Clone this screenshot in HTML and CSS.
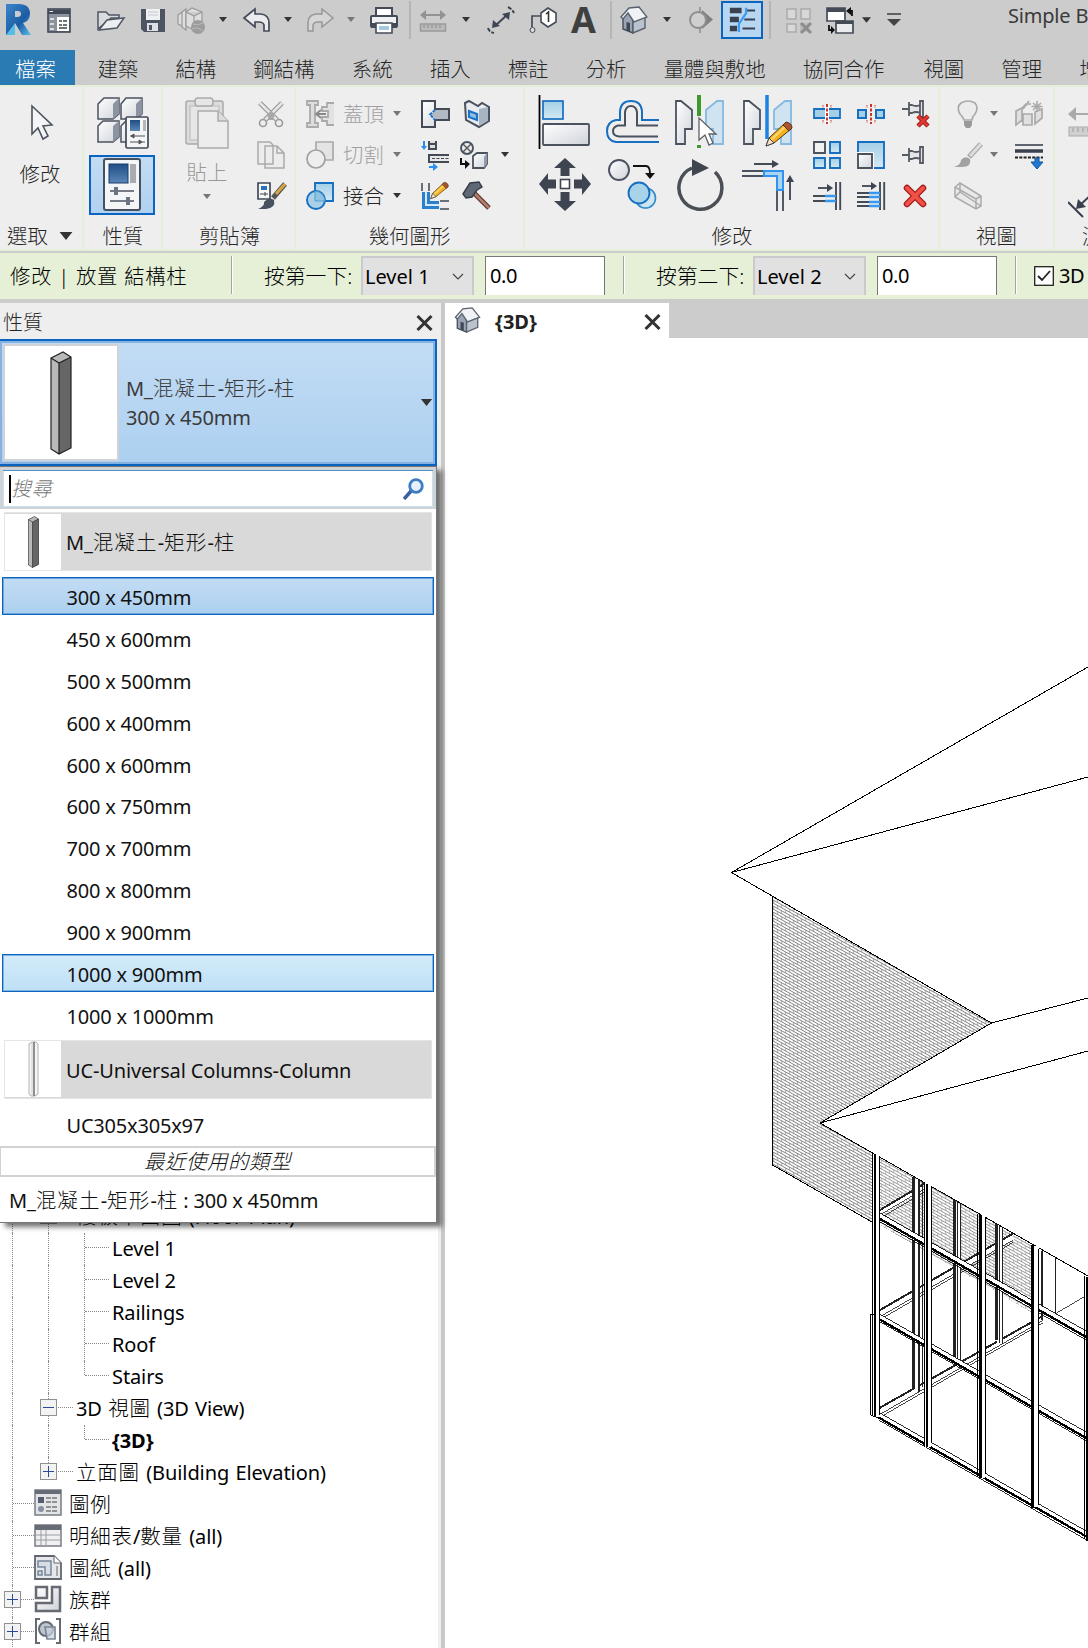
FILE: index.html
```html
<!DOCTYPE html>
<html lang="zh-Hant">
<head>
<meta charset="utf-8">
<title>Simple Building</title>
<link rel="stylesheet" href="styles.css">
</head>
<body>
<svg class="defs" width="0" height="0">
  <defs>
    <linearGradient id="metal" x1="0" y1="0" x2="1" y2="1"><stop offset="0" stop-color="#fff"/><stop offset="1" stop-color="#cfd3da"/></linearGradient>
    <linearGradient id="sky" x1="0" y1="0" x2="0" y2="1"><stop offset="0" stop-color="#a4cfe6"/><stop offset="1" stop-color="#d3e9f4"/></linearGradient>
    <linearGradient id="navy" x1="0" y1="0" x2="0" y2="1"><stop offset="0" stop-color="#1f4e86"/><stop offset="1" stop-color="#5b86b6"/></linearGradient>
    <linearGradient id="logo" x1="0" y1="0" x2="1" y2="1"><stop offset="0" stop-color="#3d86cb"/><stop offset=".6" stop-color="#1b5ca3"/><stop offset="1" stop-color="#5cc0ea"/></linearGradient>
    <pattern id="brick" width="8" height="6" patternUnits="userSpaceOnUse" patternTransform="skewY(29)"><path d="M0 .5H8M0 3.5H8M1.5.5V3.5M5.5 3.5V6.5" stroke="#858585" stroke-width=".85" fill="none"/></pattern>
    <pattern id="brick2" width="24" height="18" patternUnits="userSpaceOnUse" patternTransform="skewY(29)"><path d="M0 1.5H24M0 10.5H24M4.5 1.5V10.5M16.5 10.5V19.5" stroke="#999" stroke-width="2.6" fill="none"/></pattern>
    <symbol id="tri" viewBox="0 0 8 5"><path d="M0 0H8L4 5Z"/></symbol>
    <symbol id="house" viewBox="0 0 28 28"><path d="M3 12L8 6L13 14V27L3 23Z" fill="#9aa4b2" stroke="#454c58" stroke-width="1.400"/><path d="M13 14V27L25 22V11Z" fill="#b9c2cd" stroke="#59616e" stroke-width="1.400"/><path d="M1 11L9 2L19 1L27 11L14 16L8 7L3 13Z" fill="#f1f2f5" stroke="#59616e" stroke-width="1.400"/><path d="M6.500 16V24L10 25.500V17Z" fill="#3f4856"/></symbol>
    <symbol id="column" viewBox="0 0 22 104"><path d="M1 7L13 1L21 6V97L9 103L1 98Z" fill="#b9b9b9"/><path d="M9 12L21 6V97L9 103Z" fill="#666"/><path d="M1 7L13 1L21 6V97L9 103L1 98ZM1 7L9 12L21 6M9 12V103" fill="none" stroke="#222" stroke-width="1.2"/></symbol>
    <symbol id="pencil" viewBox="0 0 28 26"><path d="M1 25L4 17L20 2L26 8L9 22Z" fill="#f6b11b" stroke="#4a3a16" stroke-width="1"/><path d="M6 19L22 4" stroke="#fbd879" stroke-width="2"/><path d="M18 4L21 1Q27 2 27 7L24 10Z" fill="#a8552f" stroke="#613018"/><path d="M1 25L4 17L9 22Z" fill="#f2e3c6" stroke="#444"/></symbol>
    <symbol id="plus" viewBox="0 0 17 17"><rect x=".5" y=".5" width="16" height="16" fill="#f3f3f3" stroke="#919191"/><path d="M3 8.5H14M8.5 3V14" stroke="#2b4a94"/></symbol>
    <symbol id="minus" viewBox="0 0 17 17"><rect x=".5" y=".5" width="16" height="16" fill="#f3f3f3" stroke="#919191"/><path d="M3 8.5H14" stroke="#2b4a94"/></symbol>
    <symbol id="close" viewBox="0 0 17 16"><path d="M1.5 1L15.5 15M15.5 1L1.5 15" stroke="#333" stroke-width="3"/></symbol>
    <symbol id="pin" viewBox="0 0 28 28"><path d="M1 14H8M8 7V21M8 10H11Q15 12 19 10V18Q15 16 11 18H8M19 6H22V22H19Z" fill="#e4e5e8" stroke="#555a63" stroke-width="1.8"/></symbol>
  </defs>
</svg>

<header class="qat">
  <svg class="i28 tall" viewBox="0 0 28 33"><path d="M1 1H14Q25 1 25 11Q25 18 18 20L26 32H17L10 20V32H1Z" fill="url(#logo)"/><path d="M10 8H13Q16 8 16 11Q16 14 12 14H10Z" fill="#ccc"/><path d="M10 20L1 32H10Z" fill="#57bce6"/></svg>
  <svg class="i28" viewBox="0 0 28 28"><rect x="3" y="3" width="22" height="23" fill="#8d939e" stroke="#414957" stroke-width="1.6"/><path d="M3 4H25V8H3Z" fill="#414957"/><path d="M12 11H24V25H12Z" fill="#fff"/><path d="M14 15H17M14 19H17M14 22H22M18 15H22M18 19H22" stroke="#444" stroke-width="1.6"/><path d="M5 12H9V14H5ZM5 17H9V19H5ZM5 22H9V24H5Z" fill="#ddd"/><path d="M4.500 5.500H8" stroke="#eee"/></svg>
  <svg class="i28" viewBox="0 0 28 28"><path d="M1 23V6H9L12 9H22V12H14L1 23Z" fill="#d8dbe0" stroke="#4f5763" stroke-width="1.5"/><path d="M2 24L10 14L27 12L20 22Z" fill="#eceef1" stroke="#4f5763" stroke-width="1.5"/></svg>
  <svg class="i28" viewBox="0 0 28 28"><path d="M2 3H26V26H5L2 23Z" fill="#4d5563"/><path d="M7 3H21V14H7Z" fill="#eef0f3"/><path d="M9 6H19M9 9H19" stroke="#c2c6cd"/><path d="M8 17H19V25H8Z" fill="#dde0e5"/><path d="M10 19H13V24H10Z" fill="#4d5563"/></svg>
  <svg class="i28" viewBox="0 0 28 28"><g fill="#dedede" stroke="#999" stroke-width="1.2"><path d="M1 9L5 6V20L1 18ZM5 6L9 3V24L5 21Z"/><path d="M9 6L15 2L25 6V17L17 24L9 20ZM9 6L17 10L25 6M17 10V24"/></g><circle cx="21" cy="21" r="7" fill="#9c9c9c"/><path d="M16 18Q20 20 26 17M15 23Q20 20 26 25" stroke="#bbb" fill="none"/></svg>
  <svg class="tri"><use href="#tri"/></svg>
  <svg class="i28" viewBox="0 0 28 28"><path d="M1 12L12 3V8H18Q26 9 26 17V25H21V19Q20 16 16 16H12V21Z" fill="#e9ebee" stroke="#444b57" stroke-width="1.7"/></svg>
  <svg class="tri"><use href="#tri"/></svg>
  <svg class="i28" viewBox="0 0 28 28"><path d="M27 12L16 3V8H10Q2 9 2 17V25H7V19Q8 16 12 16H16V21Z" fill="#d6d6d6" stroke="#969696" stroke-width="1.5"/></svg>
  <svg class="tri dim"><use href="#tri"/></svg>
  <svg class="i28" viewBox="0 0 28 28"><path d="M6 9V2H22V9" fill="#fff" stroke="#444b57" stroke-width="2"/><rect x="1" y="10" width="26" height="11" rx="1" fill="#eef0f3" stroke="#444b57" stroke-width="2"/><path d="M1 17H27V21H1Z" fill="#444b57"/><path d="M6 17H22V27H6Z" fill="#fff" stroke="#444b57" stroke-width="1.600"/><path d="M9 20H19V24H9Z" fill="#a5c8df"/></svg>
  <i class="vsep"></i>
  <svg class="i28" viewBox="0 0 28 28"><path d="M5 9H23" stroke="#929292" stroke-width="2"/><path d="M7 4V14L1 9ZM21 4V14L27 9Z" fill="#929292"/><rect x="1.500" y="18" width="25" height="7" fill="#bbb" stroke="#999" stroke-width="1.500"/><path d="M5 19V22M9 19V22M13 19V22M17 19V22M21 19V22" stroke="#888"/></svg>
  <svg class="tri"><use href="#tri"/></svg>
  <svg class="i28" viewBox="0 0 28 28"><path d="M8 20L21 8" stroke="#3e4654" stroke-width="2"/><path d="M5 22L6 14L13 20ZM23 6L22 14L15 8Z" fill="#3e4654"/><path d="M1 22Q2 26 7 27M21 1Q25 3 27 7" stroke="#3e4654" stroke-width="2" stroke-dasharray="4 1.500" fill="none"/></svg>
  <svg class="i28" viewBox="0 0 28 28"><path d="M3 21V10H12" stroke="#444b57" stroke-width="1.700" fill="none"/><circle cx="3.500" cy="24" r="2.500" fill="#ddd" stroke="#444b57"/><path d="M12 7L19 2L27 7V16L19 21L12 16Z" fill="#fff" stroke="#444b57" stroke-width="1.600"/><path d="M17 8L19.500 6V16" stroke="#333" stroke-width="1.600" fill="none"/></svg>
  <b class="bigA">A</b>
  <i class="vsep"></i>
  <svg class="i28"><use href="#house"/></svg>
  <svg class="tri"><use href="#tri"/></svg>
  <svg class="i28" viewBox="0 0 28 28"><path d="M13 1V27" stroke="#8f8f8f" stroke-width="1.600"/><path d="M15 4L26 13.500L15 23Z" fill="#808080"/><circle cx="11" cy="14" r="8" fill="#cfcfcf" stroke="#8f8f8f" stroke-width="2"/></svg>
  <span class="qat-active"><svg viewBox="0 0 30 30"><path d="M1 5H14M1 15H11M1 25H9" stroke="#39414f" stroke-width="6"/><path d="M19 5H29M17 15H29M15 25H29" stroke="#39414f" stroke-width="2"/><path d="M19 2V8L11 20V29" stroke="#3d9bf2" stroke-width="2.500" fill="none"/></svg></span>
  <i class="vsep"></i>
  <svg class="i28" viewBox="0 0 28 28"><path d="M2 3H11V13H2ZM16 3H25V13H16ZM2 18H11V26H2Z" fill="#d8d8d8" stroke="#aaa" stroke-width="1.500"/><path d="M15 17H25V26H15Z" fill="#bbb"/><path d="M16 17L26 27M26 17L16 27" stroke="#8d8d8d" stroke-width="3"/></svg>
  <svg class="i28" viewBox="0 0 28 28"><path d="M1 2H19V15H1Z" fill="#fff" stroke="#444b57" stroke-width="1.700"/><path d="M1 2H19V6H1Z" fill="#444b57"/><path d="M10 15H27V27H10Z" fill="#e9ebee" stroke="#444b57" stroke-width="1.700"/><path d="M10 15H27V18H10Z" fill="#444b57"/><path d="M22 5H26V10M3 19V24H6" stroke="#111" stroke-width="1.800" fill="none"/><path d="M25 1L20 5L25 9ZM5 20L9 24L5 28Z" fill="#111"/></svg>
  <svg class="tri big"><use href="#tri"/></svg>
  <svg class="cust" viewBox="0 0 14 14"><path d="M0 1H14" stroke="#444" stroke-width="1.600"/><path d="M0 6H14L7 13Z" fill="#444"/></svg>
  <span class="title">Simple Building</span>
</header>

<nav class="tabs">
  <span class="file">檔案</span><span>建築</span><span>結構</span><span>鋼結構</span><span>系統</span><span>插入</span><span>標註</span><span>分析</span><span>量體與敷地</span><span class="collab">協同合作</span><span>視圖</span><span>管理</span><span>增益集</span>
</nav>

<section class="ribbon">
  <div class="panel p1">
    <div class="modify"><svg viewBox="0 0 24 38"><path d="M2 2V30L8 24L13 35L18 32L13 22L22 21Z" fill="#f4f5f7" stroke="#4d5460" stroke-width="1.600"/></svg><span>修改</span></div>
    <div class="plabel">選取 <svg class="tri huge"><use href="#tri"/></svg></div>
  </div>
  <div class="panel p2">
    <div class="props">
      <svg width="54" height="54" viewBox="0 0 54 54"><g fill="url(#metal)" stroke="#4b525f" stroke-width="1.500"><path d="M2 8L8 2H23V18L17 23H2Z"/><path d="M25 8L30 2H46V18L40 23H25Z"/><path d="M2 30L7 25H23V41L17 46H2Z"/><path d="M25 30L30 25H46V46H25Z"/></g><path d="M17 8L23 2V18L17 23ZM40 8L46 2V18L40 23ZM17 30L23 25V41L17 46Z" fill="#8c94a1"/><rect x="30" y="21" width="22" height="31" rx="1.500" fill="#f4f5f7" stroke="#414957" stroke-width="1.700"/><rect x="34" y="24" width="10" height="11" fill="url(#navy)"/><path d="M47 24H50V35H47Z" fill="#b4b6ba"/><path d="M34 40H49M34 46H49" stroke="#555"/><path d="M35 40L38 38V42ZM46 46L43 44V48Z" fill="#555" stroke="#555"/></svg>
      <span class="on"><svg width="38" height="54" viewBox="0 0 38 54"><rect x="1" y="1" width="36" height="51" rx="2" fill="#f4f5f7" stroke="#46505e" stroke-width="2"/><rect x="6" y="6" width="19" height="19" fill="url(#navy)" stroke="#173d6c"/><path d="M27 6H33V25H27Z" fill="#a9abaf"/><path d="M7 33H31M7 43H31" stroke="#4c5461" stroke-width="1.500"/><path d="M11 29H15V37H11ZM23 39H27V47H23Z" fill="#6b7482"/></svg></span>
    </div>
    <div class="plabel">性質</div>
  </div>
  <div class="panel p3">
    <div class="clip">
      <div class="paste">
        <svg width="46" height="54" viewBox="0 0 46 54"><g fill="#dcdcdc" stroke="#aaa" stroke-width="1.500"><rect x="2" y="5" width="37" height="43" rx="2"/><path d="M6 10H35V44H6Z" fill="#e6e6e6" stroke="#c6c6c6"/><rect x="11" y="2" width="18" height="8" rx="3" fill="#e6e6e6"/><path d="M14 15H34L44 25V52H14Z" fill="#ededed"/><path d="M34 15V25H44"/></g></svg>
        <span>貼上</span><svg class="tri dim"><use href="#tri"/></svg>
      </div>
      <div class="stack">
        <svg class="i28" viewBox="0 0 28 28"><path d="M3 3L20 20M25 3L8 20" stroke="#999" stroke-width="5"/><path d="M3 3L20 20M25 3L8 20" stroke="#e6e6e6" stroke-width="2.600"/><circle cx="6" cy="23" r="3.500" fill="#eee" stroke="#999" stroke-width="1.600"/><circle cx="22" cy="23" r="3.500" fill="#eee" stroke="#999" stroke-width="1.600"/><path d="M10 14L14 11L18 14L16 20H12Z" fill="#a8a8a8"/></svg>
        <svg class="i28" viewBox="0 0 28 28"><path d="M1 1H13L16 4V23H1ZM8 5H20L27 12V27H8ZM20 5V12H27" fill="#ececec" stroke="#aaa" stroke-width="1.500"/></svg>
        <svg class="i28" viewBox="0 0 28 28"><path d="M1 1H13V17H1Z" fill="#f7f7f7" stroke="#414957" stroke-width="1.700"/><path d="M4 4H10V8H4Z" fill="#2671bb"/><path d="M3 12H11M8 10V14" stroke="#444"/><path d="M28 2L16 16" stroke="#555" stroke-width="5"/><path d="M28 2L19 12" stroke="#d7a643" stroke-width="3"/><path d="M1 27Q8 24 7 20Q12 14 17 18Q19 26 9 27Z" fill="#475160"/></svg>
      </div>
    </div>
    <div class="plabel">剪貼簿</div>
  </div>
  <div class="panel p4">
    <div class="geo">
      <svg class="i28" viewBox="0 0 28 28"><path d="M1 1H12V5H9V23H12V27H1V23H4V5H1Z" fill="#ddd" stroke="#aaa" stroke-width="1.800"/><path d="M28 3H21V7H16V11H22V17H16V21H21V25H28" fill="#e2e2e2" stroke="#aaa" stroke-width="1.800"/><path d="M11 14H20M15 10L10 14L15 18" stroke="#888" stroke-width="1.800" fill="none"/></svg>
      <span class="off">蓋頂</span><svg class="tri dim"><use href="#tri"/></svg>
      <svg class="i28" viewBox="0 0 28 28"><path d="M1 1H14V9H28V20H14V27H1Z" fill="url(#metal)" stroke="#444b57" stroke-width="2"/><path d="M15 10L10 14.500L15 19H27V10Z" fill="#b3bac4"/><path d="M14 10L9 14.500L14 20" stroke="#1d72c8" stroke-width="2" stroke-dasharray="3 1" fill="none"/></svg>
      <svg class="i28" viewBox="0 0 28 28"><path d="M2 3L6 1L15 6L19 3L26 7V21L16 27L3 20Z" fill="#e8ebef" stroke="#4b525f" stroke-width="2"/><path d="M16 9V26L25 20.500V7Z" fill="#a7b4c2"/><path d="M6 11L14 14V20L6 17Z" fill="#8fc0e8" stroke="#1d72c8" stroke-width="2.200"/></svg><i></i>
      <svg class="i28" viewBox="0 0 28 28"><path d="M10 1H27V19H10Z" fill="#e4e4e4" stroke="#aaa" stroke-width="1.700"/><circle cx="10" cy="18" r="9" fill="#eee" stroke="#a0a0a0" stroke-width="1.700"/></svg>
      <span class="off">切割</span><svg class="tri dim"><use href="#tri"/></svg>
      <svg class="i28" viewBox="0 0 28 28"><path d="M3 0V6M8 26H13" stroke="#2b8df0" stroke-width="2"/><path d="M0 5H6L3 9ZM12 22V30L17 26Z" fill="#2b8df0"/><path d="M8 0V8H15V0M8 3H15" stroke="#444b57" stroke-width="2" fill="#ddd"/><path d="M28 14H8V21H28" fill="#e5e7ea" stroke="#444b57" stroke-width="2"/><path d="M11 17.500H28" stroke="#444" stroke-dasharray="3 1.500"/></svg>
      <svg class="i28 m2" viewBox="0 0 28 28"><circle cx="7" cy="7" r="6" fill="#e8eaed" stroke="#4b525f" stroke-width="1.900"/><path d="M3 3L11 11M11 3L3 11" stroke="#555" stroke-width="1.400"/><path d="M1 17V23H6" stroke="#111" stroke-width="2" fill="none"/><path d="M5 19L10 23L5 28Z" fill="#111"/><path d="M13 15L17 12H27V23L24 27H13Z" fill="url(#metal)" stroke="#4b525f" stroke-width="1.800"/><path d="M24 16L27 12V23L24 27Z" fill="#929ba8"/></svg><svg class="tri"><use href="#tri"/></svg>
      <svg class="i28" viewBox="0 0 28 28"><path d="M9 1H27V19H9Z" fill="url(#sky)" stroke="#176fc1" stroke-width="1.900"/><circle cx="10" cy="18" r="9" fill="#a9d2e8" stroke="#176fc1" stroke-width="1.900"/><path d="M9 9V19H19Q18 10 9 9Z" fill="#8dc4e1" stroke="#579dcc"/></svg>
      <span>接合</span><svg class="tri"><use href="#tri"/></svg>
      <svg class="i28" viewBox="0 0 28 28"><path d="M1 1V9M8 1V9M19 19H28M19 27H28" stroke="#6a707a" stroke-width="2"/><path d="M1 10V27H18V19H9V10Z" fill="#2a80cc"/><path d="M5 10V23H18" fill="none" stroke="#d5eaf6" stroke-width="2"/><use href="#pencil" x="9" y="-1" width="19" height="19"/></svg>
      <svg class="i28" viewBox="0 0 28 28"><path d="M11 11L26 26" stroke="#583732" stroke-width="5"/><path d="M11 11L26 26" stroke="#b87e6d" stroke-width="2.500"/><path d="M0 12L7 1L16 0L19 5L14 8L9 15L3 16Z" fill="#5f6976" stroke="#343b46" stroke-width="1.400"/></svg><i></i>
    </div>
    <div class="plabel">幾何圖形</div>
  </div>
  <div class="panel p5">
    <div class="mod">
      <div class="large">
        <svg viewBox="0 0 56 56"><path d="M3.500 2V56" stroke="#000" stroke-width="1.800"/><rect x="7" y="8" width="20" height="18" fill="url(#sky)" stroke="#176fc1" stroke-width="1.700"/><rect x="7" y="31" width="46" height="21" rx="1" fill="url(#metal)" stroke="#4b525f" stroke-width="1.800"/></svg>
        <svg viewBox="0 0 56 56"><path d="M55 27H38V18Q37 8 27 8Q17 8 16 18V27H12Q3 29 3 38Q3 48 12 49H55" fill="none" stroke="#176fc1" stroke-width="2"/><path d="M54 32.500H33V19Q32 13 27 13Q22 13 21 19V32.500H14Q9 34 9 38Q9 43 15 43.500H54" fill="none" stroke="#4b525f" stroke-width="2"/></svg>
        <svg viewBox="0 0 56 56"><path d="M5 8H10L21 17V36H14V51H5Z" fill="url(#metal)" stroke="#4b525f" stroke-width="1.800"/><path d="M52 8H46L35 17V36H42V51H52Z" fill="#cfe4f0" stroke="#86b9df" stroke-width="1.800"/><path d="M28 2V23M28 52V55" stroke="#3d9a2d" stroke-width="4"/><path d="M28 25V47L34 42L38 52L42 50L38 41H45Z" fill="#fff" stroke="#5c6068" stroke-width="1.300"/></svg>
        <svg viewBox="0 0 56 56"><path d="M5 8H10L21 17V36H14V51H5Z" fill="url(#metal)" stroke="#4b525f" stroke-width="1.800"/><path d="M52 8H46L35 17V36H42V51H52Z" fill="#cfe4f0" stroke="#86b9df" stroke-width="1.800"/><path d="M28 2V46" stroke="#1d82e2" stroke-width="3.500"/><use href="#pencil" x="26" y="28" width="28" height="26"/></svg>
        <svg viewBox="0 0 56 56"><path d="M29 2L40 12H33.500V20H24.500V12H18ZM29 55L40 45H33.500V36H24.500V45H18ZM3 28L12 17V23.500H20V32.500H12V39ZM55 28L46 17V23.500H38V32.500H46V39Z" fill="#3e4551"/><rect x="24.500" y="23.500" width="9" height="9" fill="#fff" stroke="#3e4551" stroke-width="1.600"/></svg>
        <svg viewBox="0 0 56 56"><circle cx="15" cy="14" r="10" fill="url(#metal)" stroke="#4b525f" stroke-width="1.900"/><path d="M29 10H42Q46 10 46 18" stroke="#111" stroke-width="1.800" fill="none"/><path d="M41 17H51L46 23Z" fill="#111"/><circle cx="41.500" cy="42" r="10" fill="#cde5f1" stroke="#318bca" stroke-width="1.600"/><circle cx="35" cy="37" r="10.500" fill="#a9d3e9" stroke="#176fc1" stroke-width="1.900"/></svg>
        <svg viewBox="0 0 56 56"><path d="M21 12A21.500 21.500 0 1 0 44 16" fill="none" stroke="#4a4e55" stroke-width="3.500"/><path d="M21 3V20L38 12Z" fill="#40454e"/></svg>
        <svg viewBox="0 0 56 56"><path d="M3 15H25M3 20H25M38 34V55M44 34V55" stroke="#4b525f" stroke-width="1.900"/><path d="M25 15H44V34H38V20H25Z" fill="#a9d3f0" stroke="#2e93ed" stroke-width="2"/><path d="M15 8H34M51 44V25" stroke="#444b57" stroke-width="1.900"/><path d="M33 4L40 8L33 12ZM47 26L51 19L55 26Z" fill="#3e4551"/></svg>
      </div>
      <div class="small">
        <svg class="i28" viewBox="0 0 28 28"><path d="M1 9H27V18H1Z" fill="#a4cfe6" stroke="#176fc1" stroke-width="1.800"/><path d="M14 4V24" stroke="#fff" stroke-width="4"/><path d="M14 4V24" stroke="#c9352c" stroke-width="2" stroke-dasharray="3 1.500"/><path d="M10 5V8M18 5V8M10 20V23M18 20V23" stroke="#c9352c" stroke-dasharray="1.500 1"/></svg>
        <svg class="i28" viewBox="0 0 28 28"><path d="M1 10H9V18H1ZM19 10H27V18H19Z" fill="#a4cfe6" stroke="#176fc1" stroke-width="2"/><path d="M14 4V24" stroke="#c9352c" stroke-width="2" stroke-dasharray="3 1.500"/><path d="M10 5V8M18 5V8M10 20V23M18 20V23" stroke="#c9352c" stroke-dasharray="1.500 1"/></svg>
        <svg class="i28" viewBox="0 0 28 28"><use href="#pin" y="-5" width="28" height="28"/><path d="M17 16L27 26M27 16L17 26" stroke="#8c1a17" stroke-width="4.500"/><path d="M17 16L27 26M27 16L17 26" stroke="#e5362e" stroke-width="2.800"/></svg>
        <svg class="i28" viewBox="0 0 28 28"><g fill="url(#sky)" stroke="#176fc1" stroke-width="1.900"><path d="M1 1H12V12H1Z" fill="#f1f1f1" stroke="#4b525f"/><path d="M17 1H27V12H17Z"/><path d="M1 17H12V27H1Z"/><path d="M17 17H27V27H17Z"/></g></svg>
        <svg class="i28" viewBox="0 0 28 28"><path d="M1 1H27V27H1Z" fill="url(#sky)" stroke="#176fc1" stroke-width="1.900"/><path d="M0 11H17V28H0Z" fill="#fff"/><path d="M1 13H15V27H1Z" fill="url(#metal)" stroke="#4b525f" stroke-width="1.900"/></svg>
        <svg class="i28"><use href="#pin"/></svg>
        <svg class="i28" viewBox="0 0 28 28"><path d="M23 0V28M27.200 0V28" stroke="#444b57" stroke-width="1.900"/><path d="M0 14H12M0 19H12" stroke="#444b57" stroke-width="1.900"/><path d="M12 14H23M12 19H23" stroke="#3698ee" stroke-width="2.500"/><path d="M5 6H17" stroke="#3e4551" stroke-width="1.800"/><path d="M14 2L20 6L14 10Z" fill="#3e4551"/></svg>
        <svg class="i28" viewBox="0 0 28 28"><path d="M23 0V28M27.200 0V28" stroke="#444b57" stroke-width="1.900"/><path d="M0 11H12M0 15H12M0 20H12M0 24H12" stroke="#444b57" stroke-width="1.900"/><path d="M12 11H23M12 15H23M12 20H23M12 24H23" stroke="#3698ee" stroke-width="2.500"/><path d="M5 4H17" stroke="#3e4551" stroke-width="1.800"/><path d="M14 0L20 4L14 8Z" fill="#3e4551"/></svg>
        <svg class="i28" viewBox="0 0 28 28"><path d="M6 6L22 22M22 6L6 22" stroke="#a31815" stroke-width="6.500" stroke-linecap="round"/><path d="M6 6L22 22M22 6L6 22" stroke="#ef5048" stroke-width="4" stroke-linecap="round"/></svg>
      </div>
    </div>
    <div class="plabel">修改</div>
  </div>
  <div class="panel p6">
    <div class="view">
      <svg class="i28" viewBox="0 0 28 28"><path d="M10 20Q9 17 6 14Q2 7 7 3Q14-1 21 3Q25 8 21 14Q18 17 18 20Z" fill="#ececec" stroke="#aaa" stroke-width="1.700"/><path d="M10 21H18V25L16 28H12L10 25Z" fill="#999"/></svg>
      <svg class="tri dim"><use href="#tri"/></svg>
      <svg class="i28" viewBox="0 0 28 28"><path d="M1 11L7 8V20L1 25ZM8 14H17V25H8ZM20 12L27 9V18L20 24ZM6 9L11 4H16M14 1L8 9" fill="#e0e0e0" stroke="#aaa" stroke-width="1.700"/><path d="M22 1V12M16.500 6.500H27.500M18 3L26 10M26 3L18 10" stroke="#aaa" stroke-width="1.600"/></svg>
      <svg class="i28" viewBox="0 0 28 28"><path d="M27 3L15 16" stroke="#aaa" stroke-width="5.500"/><path d="M27 3L16 15" stroke="#ddd" stroke-width="3"/><path d="M0 26Q7 24 7 19Q11 14 16 18Q18 25 9 26Z" fill="#a2a2a2"/></svg>
      <svg class="tri dim"><use href="#tri"/></svg>
      <svg class="i28" viewBox="0 0 28 28"><path d="M0 4H28" stroke="#39414f" stroke-width="1.600"/><path d="M0 10H28" stroke="#39414f" stroke-width="3.500"/><path d="M0 16.500H28" stroke="#222" stroke-width="1.800" stroke-dasharray="3 1.300"/><path d="M20 17H24V21H28L22 28L16 21H20Z" fill="#1f78d4" stroke="#155497"/></svg>
      <svg class="i28" viewBox="0 0 28 28"><path d="M1 5L6 1L27 14V24L22 27L1 15ZM1 5L22 17V27M22 17L27 14M6 1V10L1 15M6 10L27 24" fill="#e9e9e9" stroke="#aaa" stroke-width="1.500"/></svg>
    </div>
    <div class="plabel">視圖</div>
  </div>
  <div class="panel p7">
    <div class="meas">
      <svg width="28" height="30" viewBox="0 0 28 30"><path d="M6 7H28" stroke="#aaa" stroke-width="2"/><path d="M8 0V14L0 7Z" fill="#aaa"/><rect x="1" y="20" width="30" height="9" fill="#d0d0d0" stroke="#aaa"/><path d="M5 21V25M10 21V25M15 21V25M20 21V25" stroke="#999"/></svg>
      <svg width="28" height="28" viewBox="0 0 28 28"><path d="M0 10L15 25M10 15L26 0" stroke="#39414f" stroke-width="2"/><path d="M8 17L10 7L18 15Z" fill="#39414f"/></svg>
    </div>
    <div class="plabel">測量</div>
  </div>
</section>

<section class="options">
  <span class="mode">修改 | 放置 結構柱</span>
  <i></i>
  <label class="first">按第一下:</label><span class="combo">Level 1<svg viewBox="0 0 12 7"><path d="M1 1L6 6L11 1" fill="none" stroke="#444" stroke-width="1.200"/></svg></span><span class="num">0.0</span>
  <i class="second-rule"></i>
  <label class="next">按第二下:</label><span class="combo">Level 2<svg viewBox="0 0 12 7"><path d="M1 1L6 6L11 1" fill="none" stroke="#444" stroke-width="1.200"/></svg></span><span class="num">0.0</span>
  <i class="third-rule"></i>
  <svg class="check" viewBox="0 0 20 20"><rect x=".7" y=".7" width="18.600" height="18.600" fill="#fff" stroke="#222" stroke-width="1.300"/><path d="M4 10L8 14L16 5" fill="none" stroke="#222" stroke-width="1.800"/></svg>
  <span class="three">3D</span>
</section>

<main class="work">
  <aside class="side">
    <div class="side-head"><span>性質</span><svg><use href="#close"/></svg></div>
    <div class="selector">
      <span class="thumb"><svg><use href="#column"/></svg></span>
      <span class="names">M_<span class="c">混凝土</span>-<span class="c">矩形</span>-<span class="c">柱</span><br>300 x 450mm</span>
      <svg class="tri huge"><use href="#tri"/></svg>
    </div>
    <div class="tree">
      <div class="row clipped"><i class="g"></i><i class="g t"><svg class="tg"><use href="#minus"/></svg></i><span class="lv2"><span class="c">樓板平面圖</span> (Floor Plan)</span></div>
      <div class="row"><i class="g"></i><i class="g"></i><i class="g h"></i><span class="leaf">Level 1</span></div>
      <div class="row"><i class="g"></i><i class="g"></i><i class="g h"></i><span class="leaf">Level 2</span></div>
      <div class="row"><i class="g"></i><i class="g"></i><i class="g h"></i><span class="leaf">Railings</span></div>
      <div class="row"><i class="g"></i><i class="g"></i><i class="g h"></i><span class="leaf">Roof</span></div>
      <div class="row"><i class="g"></i><i class="g"></i><i class="g h end"></i><span class="leaf">Stairs</span></div>
      <div class="row"><i class="g"></i><i class="g h t"><svg class="tg"><use href="#minus"/></svg></i><span class="lv2">3D <span class="c">視圖</span> (3D View)</span></div>
      <div class="row"><i class="g"></i><i class="g"></i><i class="g h end"></i><b class="leaf">{3D}</b></div>
      <div class="row"><i class="g"></i><i class="g h t end"><svg class="tg"><use href="#plus"/></svg></i><span class="lv2"><span class="c">立面圖</span> (Building Elevation)</span></div>
      <div class="row top"><i class="g h"></i><svg class="ti" viewBox="0 0 28 28"><path d="M1 1H27V26H1Z" fill="#e3e4e7" stroke="#777b84" stroke-width="1.500"/><path d="M1 1H27V5H1Z" fill="#666c78"/><path d="M4 8H10V14H4Z" fill="#555e70"/><circle cx="7" cy="20" r="3" fill="#8790a0"/><path d="M12 9H24M12 13H24M12 18H24M12 22H24" stroke="#777" stroke-width="1.300" stroke-dasharray="5 1"/></svg><span class="c">圖例</span></div>
      <div class="row top"><i class="g h"></i><svg class="ti" viewBox="0 0 28 28"><path d="M1 4H27V25H1Z" fill="#f0f0f1" stroke="#777b84" stroke-width="1.500"/><path d="M1 4H27V9H1Z" fill="#666c78"/><path d="M1 14H27M1 19H27M7 9V25M12 9V25" stroke="#999da5"/></svg><span class="mixed"><span class="c">明細表</span>/<span class="c">數量</span> (all)</span></div>
      <div class="row top"><i class="g h"></i><svg class="ti" viewBox="0 0 28 28"><path d="M1 3H20L27 10V26H1Z" fill="#e5e7ea" stroke="#60656f" stroke-width="1.800"/><path d="M20 3V10H27" fill="#fff" stroke="#60656f"/><path d="M4 8H17V22H11V14H4ZM4 18H8V22H4Z" fill="#d7dde5" stroke="#76869a" stroke-width="1.500"/><path d="M23 13V23" stroke="#666"/></svg><span class="mixed"><span class="c">圖紙</span> (all)</span></div>
      <div class="row top"><i class="g h rt"><svg class="tg"><use href="#plus"/></svg></i><svg class="ti" viewBox="0 0 28 28"><path d="M2 2H13V13H2ZM18 2H26V26H2V18H18Z" fill="url(#metal)" stroke="#656a73" stroke-width="2.500"/></svg><span class="c">族群</span></div>
      <div class="row top"><i class="g h rt"><svg class="tg"><use href="#plus"/></svg></i><svg class="ti" viewBox="0 0 28 28"><path d="M6 2H2V26H6M22 2H26V26H22" fill="none" stroke="#656a73" stroke-width="2"/><circle cx="12" cy="12" r="7" fill="#bfc6cf" stroke="#656a73" stroke-width="2"/><path d="M11 10H21V22H13Z" fill="#c7d2df" fill-opacity=".7" stroke="#7c8694" stroke-width="1.700"/></svg><span class="c">群組</span></div>
    </div>

    <div class="popup">
      <div class="search"><i class="caret"></i><em>搜尋</em><svg viewBox="0 0 21 22"><path d="M1 21L9 12" stroke="#3b5fa3" stroke-width="3.500"/><circle cx="13" cy="8" r="6.300" fill="#e6f1fa" stroke="#3f7cc4" stroke-width="2.800"/></svg></div>
      <div class="list">
        <div class="group"><span class="pic"><svg viewBox="0 0 22 104" preserveAspectRatio="none"><use href="#column"/></svg></span><div>M_<span class="c">混凝土</span>-<span class="c">矩形</span>-<span class="c">柱</span></div></div>
        <div class="item sel first-item">300 x 450mm</div>
        <div class="item">450 x 600mm</div>
        <div class="item">500 x 500mm</div>
        <div class="item">600 x 400mm</div>
        <div class="item">600 x 600mm</div>
        <div class="item">600 x 750mm</div>
        <div class="item">700 x 700mm</div>
        <div class="item">800 x 800mm</div>
        <div class="item">900 x 900mm</div>
        <div class="item hover">1000 x 900mm</div>
        <div class="item">1000 x 1000mm</div>
        <div class="group uc"><span class="pic"><svg viewBox="0 0 11 56"><path d="M1 3L4 1H8L10 3V53L7 55H3L1 53Z" fill="#f6f6f6" stroke="#b0b0b0"/><path d="M4 2V54" stroke="#ccc"/><path d="M6 1V55" stroke="#777" stroke-width="1.600"/></svg></span><div>UC-Universal Columns-Column</div></div>
        <div class="item last-item">UC305x305x97</div>
      </div>
      <div class="recent-head"><em>最近使用的類型</em></div>
      <div class="recent">M_<span class="c">混凝土</span>-<span class="c">矩形</span>-<span class="c">柱</span> : 300 x 450mm</div>
    </div>
  </aside>

  <section class="viewport">
    <div class="doc-tabs"><div class="doc-tab"><svg class="h"><use href="#house"/></svg><b>{3D}</b><svg class="x"><use href="#close"/></svg></div></div>
    <svg class="model" viewBox="445 338 643 1310">
      <path d="M772.500 896L991 1023L820 1123L874 1154L872 1222L772.500 1165Z" fill="url(#brick)"/>
      <g fill="none" stroke="#000" stroke-width="1" shape-rendering="crispEdges">
        <path d="M1088 667L731.500 872.500L1088 777M731.500 872.500L991.500 1023L1088 998M991.500 1023L820 1123L1088 1051M820 1123L1088 1276M772.500 896V1165L872 1222"/>
      </g>
      <g transform="translate(720 1100) scale(.33333)" fill="none" stroke="#222" shape-rendering="crispEdges">
        <path d="M480 172L940 437V640L480 375Z" fill="url(#brick2)" stroke="none"/>
        <path d="M480 338L612 262M480 640L880 410M480 933L968 658" stroke="#fff" stroke-width="16"/>
        <path d="M480 330L612 252M480 630L880 400M480 923L968 648" stroke-width="6"/>
        <path d="M480 345L612 267M480 650L880 420M480 943L968 662M485 352L612 277M485 656L880 427M485 949L968 669M1000 645L1093 590" stroke-width="2.500"/>
        <path d="M588 236V866M715 312V785M838 380V728" stroke="#fff" stroke-width="14"/>
        <path d="M580 230V867M704 300V770M829 372V720" stroke-width="8"/>
        <path d="M597 240V875M967 452V660" stroke-width="5"/>
        <path d="M712 305V780M723 312V785M838 378V730M847 384V733M956 446V660M1006 475V640M607 245V860" stroke-width="3"/>
        <g stroke="#fff" stroke-width="18"><path d="M468 344L1100 706M468 646L1100 1008M468 942L1100 1304"/></g>
        <g stroke="#000">
          <path d="M468 350L1100 712M468 652L1100 1015M468 948L1100 1310" stroke-width="7"/>
          <path d="M478 338L1100 694M478 642L1100 997M478 938L1100 1294M478 364L1100 721M478 664L1100 1023M478 961L1100 1320" stroke-width="2.500"/>
        </g>
        <path d="M467 162V950M624 248V1040M787 345V1133M947 437V1222" stroke="#fff" stroke-width="18"/>
        <g stroke="#000">
          <path d="M458.500 162V945M478.500 170V945M613.500 248V1040M634.500 262V1030M772.500 342V1130M796.500 355V1122M955.500 446V1215M1093.500 527V1316M451 645H463M451.500 645V945L463 950" stroke-width="3"/>
          <path d="M466 162V950" stroke-width="6"/>
          <path d="M621 252V1040M781 345V1133" stroke-width="8"/>
          <path d="M938 435V1224M1102 530V1322" stroke-width="10"/>
        </g>
      </g>
    </svg>
  </section>
</main>
</body>
</html>
```
FILE: styles.css
```css
* { box-sizing: border-box; }
body {
  margin: 0; width: 1088px; height: 1648px; overflow: hidden; background: #ccc;
  font-family: "Noto Sans", "Noto Sans CJK TC", sans-serif; font-size: 20px; line-height: 28px; color: #262626;
  display: flex; flex-direction: column;
}
svg { display: block; flex: none; }
i { font-style: normal; }
.defs { position: absolute; }
.i28 { width: 28px; height: 28px; overflow: visible; }
.tri { width: 8px; height: 5px; fill: #333; }
.tri.dim { fill: #777; }
.tri.big { width: 9px; height: 6px; }
.tri.huge { width: 14px; height: 8px; }
.c { font-weight: 300; font-size: 20.5px; letter-spacing: 1.2px; line-height: 1; }

.qat {
  height: 50px; flex: none; padding: 0 0 11px 6px; display: grid; align-items: center; overflow: hidden;
  grid-template-columns: 39px 52px 42px 38px 42px 24px 41px 22px 41px 23px 39px 10px 43px 25px 42px 41px 40px 10px 43px 24px 34px 48px 16px 41px 36px 25px 121px 160px;
}
.qat .tall { height: 33px; margin-left: -1px; }
.vsep { width: 2px; height: 38px; background: #b5b5b5; }
.bigA { font-size: 36px; line-height: 38px; color: #3f3f3f; margin-left: 1px; }
.qat-active { width: 42px; height: 38px; border: 2px solid #0b64c0; background: #b6d6f2; display: flex; align-items: center; justify-content: center; }
.qat-active svg { width: 29px; height: 27px; }
.cust { width: 14px; height: 14px; }
.title { white-space: nowrap; color: #3a3a3a; margin-top: -7px; letter-spacing: -.2px; }

.tabs { height: 35px; flex: none; display: flex; font-size: 20.4px; font-weight: 300; line-height: 39px; overflow: hidden; white-space: nowrap; }
.tabs span { margin-right: 37.200px; flex: none; }
.tabs .collab { margin-right: 39px; }
.tabs .file { background: #2a7ab3; color: #fff; width: 75px; padding-left: 15px; margin-right: 22.500px; }

.ribbon { height: 166px; flex: none; background: #e3efd6; padding: 2px 0; display: flex; gap: 2px; overflow: hidden; font-size: 20.400px; font-weight: 300; }
.panel { background: #eee; height: 162px; flex: none; display: flex; flex-direction: column; justify-content: space-between; }
.p1 { width: 82px; } .p2 { width: 77px; } .p3 { width: 131px; } .p4 { width: 227px; } .p5 { width: 413px; } .p6 { width: 113px; } .p7 { width: 60px; }
.plabel { height: 26px; line-height: 26px; text-align: center; white-space: nowrap; }
.p1 .plabel { display: flex; align-items: center; gap: 11px; padding-left: 7px; }
.p2 .plabel { padding-left: 1px; }
.p3 .plabel { padding-left: 2px; }
.p5 .plabel { padding-left: 1px; }
.p7 .plabel { text-align: left; padding-left: 27px; }
.modify { display: flex; flex-direction: column; align-items: center; padding: 17px 2px 0 0; gap: 18px; }
.modify svg { width: 24px; height: 38px; margin-left: 3px; }
.props { display: flex; flex-direction: column; align-items: center; padding-top: 9px; gap: 5px; }
.props .on { width: 66px; height: 60px; border: 2px solid #0b64c0; background: linear-gradient(#c3dcf4, #b0d1f0); display: flex; align-items: center; justify-content: center; margin-right: 1px; }
.clip { display: grid; grid-template-columns: 72px 28px; padding-left: 21px; }
.paste { width: 46px; padding-top: 9px; display: flex; flex-direction: column; align-items: center; gap: 8px; color: #999; white-space: nowrap; }
.stack, .geo, .small, .view { padding-top: 6px; display: grid; grid-auto-rows: 41px; align-items: center; }
.stack { margin-left: 1px; }
.geo { padding-left: 10px; grid-template-columns: 37px 50px 28px 42px 38px 8px; }
.geo .m2 { margin-left: -3px; }
.off { color: #a0a0a0; }
.mod { display: flex; padding-left: 11px; }
.large { display: grid; grid-template-columns: repeat(4, 67.700px); grid-auto-rows: 63px; padding-top: 2px; width: 277px; align-items: center; }
.large svg { width: 56px; height: 56px; }
.small { grid-template-columns: 44px 44px 28px; }
.view { padding-left: 14px; grid-template-columns: 36px 25px 28px; }
.meas { padding: 20px 0 0 13px; display: flex; flex-direction: column; gap: 55px; }

.options { height: 52px; flex: none; border-top: 2px solid #ccc; border-bottom: 4px solid #ccc; background: #e5f0d7; display: flex; align-items: flex-start; color: #000; padding-top: 3px; overflow: hidden; white-space: nowrap; font-weight: 300; }
.options > span, .options label { line-height: 40px; height: 39px; flex: none; }
.options .mode { width: 231px; padding-left: 10px; font-size: 20.400px; letter-spacing: .7px; }
.options i { width: 2px; height: 38px; background: #a5a5a5; border-right: 1px solid #fff; flex: none; }
.options .first { width: 128px; padding-left: 31px; }
.options label { font-size: 20.800px; }
.options .combo { width: 113px; border: 2px solid #c8cacd; border-bottom: 0; background: #e1e1e1; padding-left: 2px; display: flex; align-items: center; justify-content: space-between; padding-right: 8px; font-weight: 400; }
.combo svg { width: 12px; height: 7px; }
.options .num { width: 120px; margin-left: 11px; border: 1px solid #777; border-bottom: 0; background: #fff; padding-left: 4px; font-weight: 400; letter-spacing: -.4px; line-height: 38px; }
.options .second-rule { margin-left: 18px; }
.options .next { width: 128px; padding-left: 31px; }
.options .third-rule { margin-left: 18px; }
.check { width: 20px; height: 20px; margin: 10px 5px 0 17px; }
.options .three { font-weight: 400; letter-spacing: -.4px; }

.work { display: flex; flex: 1; min-height: 0; }
.side { width: 445px; flex: none; position: relative; background: #eee; border-right: 4px solid #c9c9c9; }
.side-head { height: 36px; display: flex; justify-content: space-between; align-items: center; padding: 3px 8px 0 3px; font-weight: 300; }
.side-head svg { width: 17px; height: 16px; }
.selector { width: 437px; height: 127px; border: 2px solid #0b64c0; border-left: 0; background: linear-gradient(#c3dcf4, #acd0f0); box-shadow: inset 0 0 0 2px #85b2e2; display: flex; align-items: center; padding-left: 3px; color: #3a3a3a; }
.thumb { width: 116px; height: 117px; flex: none; background: #fff; border: 2px solid #cfd2d6; display: flex; align-items: center; justify-content: center; }
.thumb svg { width: 22px; height: 104px; }
.names { line-height: 29px; padding: 1px 0 0 7px; width: 301px; flex: none; letter-spacing: -.2px; }
.selector .huge { width: 13px; height: 7px; }

.tree { margin: 735px 3px 0 0; background: #fff; color: #000; letter-spacing: -.1px; height: 447px; overflow: hidden; }
.row { height: 32px; display: flex; padding-left: 12px; line-height: 31px; white-space: nowrap; }
.row > .c { line-height: 30px; letter-spacing: .7px; }
.row .lv2, .row .mixed { word-spacing: 1.2px; }
.row .lv2 .c, .row .mixed .c { letter-spacing: .8px; }
.g { width: 36px; flex: none; position: relative; border-left: 1px dotted #888; }
.g.h::after { content: ""; position: absolute; left: 0; top: 14px; width: 24px; border-top: 1px dotted #888; }
.g.end { border-left-color: transparent; }
.g.end::before { content: ""; position: absolute; left: -1px; top: 0; height: 14px; border-left: 1px dotted #888; }
.tg { position: absolute; left: -9px; top: 6px; width: 17px; height: 17px; z-index: 1; }
.leaf, .lv2 { margin-left: -8px; }
.top .g { width: 22px; }
.top .g.h::after { width: 21px; }
.ti { width: 28px; height: 28px; margin-right: 7px; }

.popup { position: absolute; z-index: 2; left: 0; top: 163px; width: 437px; height: 757px; background: #fff; border: 1px solid #777; border-left: 0; box-shadow: 5px 4px 5px rgba(0,0,0,.55); color: #111; letter-spacing: -.2px; white-space: nowrap; }
.search { height: 42px; background: #fff; border: 3px solid #d0d3d6; border-width: 3px 3px 2px; box-shadow: inset 0 1px #4d91c6, inset 0 0 0 1px #c4e2f2; display: flex; align-items: center; padding: 0 9px 0 6px; }
.caret { width: 2px; height: 28px; background: #000; }
.search em { flex: 1; color: #777; font-weight: 300; letter-spacing: .4px; line-height: 26px; }
.search svg { width: 21px; height: 22px; }
.list { height: 637px; padding-top: 1px; }
.group { margin: 2px 4px 0; height: 59px; background: #d9d9d9; border: 1px solid #e5e5e5; display: flex; align-items: center; gap: 5px; }
.group .pic { width: 56px; height: 56px; background: #fff; display: flex; align-items: center; justify-content: center; }
.group > div { padding-top: 3px; }
.group svg { width: 11px; height: 52px; }
.group.uc { margin-top: 6px; letter-spacing: -.15px; }
.group.uc svg { height: 56px; }
.item { height: 38px; margin: 0 2px 3.900px; padding-left: 63.5px; line-height: 39px; border: 1px solid transparent; }
.first-item { margin-top: 6px; }
.last-item { margin-top: 6px; margin-bottom: 0; }
.sel { border-color: #0b64c0; background: linear-gradient(#c3dcf4, #acd0f0); box-shadow: inset 0 0 0 1px #6ea5dc; }
.hover { border-color: #0b64c0; background: linear-gradient(#d3ebfa, #bfe0f6); box-shadow: inset 0 0 0 1px #7fb4e2; }
.recent-head { height: 31px; border: 2px solid #d2d2d2; border-left-width: 1px; text-align: center; line-height: 27px; font-weight: 300; font-size: 20.500px; letter-spacing: .5px; }
.recent { padding: 10px 0 0 9px; }

.viewport { width: 643px; display: flex; flex-direction: column; background: #fff; }
.doc-tabs { height: 35px; background: #ccc; }
.doc-tab { width: 224px; height: 35px; background: #fff; display: flex; align-items: center; padding: 3px 8px 0 9px; color: #222; }
.doc-tab .h { width: 27px; height: 26px; margin: -4px 14px 0 0; }
.doc-tab b { flex: 1; }
.doc-tab .x { width: 17px; height: 16px; }
.model { width: 643px; height: 1310px; }
```
